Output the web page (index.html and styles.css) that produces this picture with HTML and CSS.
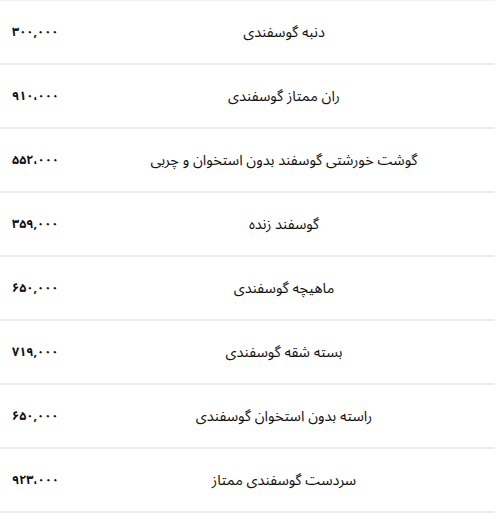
FILE: index.html
```html
<!DOCTYPE html>
<html lang="fa">
<head>
<meta charset="utf-8">
<link rel="stylesheet" href="styles.css">
</head>
<body>
<div class="table" dir="rtl">
  <div class="row"><div class="name">دنبه گوسفندی</div><div class="price">۳۰۰,۰۰۰</div></div>
  <div class="row"><div class="name">ران ممتاز گوسفندی</div><div class="price">۹۱۰،۰۰۰</div></div>
  <div class="row"><div class="name">گوشت خورشتی گوسفند بدون استخوان و چربی</div><div class="price">۵۵۲،۰۰۰</div></div>
  <div class="row"><div class="name">گوسفند زنده</div><div class="price">۳۵۹,۰۰۰</div></div>
  <div class="row"><div class="name">ماهیچه گوسفندی</div><div class="price">۶۵۰,۰۰۰</div></div>
  <div class="row"><div class="name">بسته شقه گوسفندی</div><div class="price">۷۱۹,۰۰۰</div></div>
  <div class="row"><div class="name">راسته بدون استخوان گوسفندی</div><div class="price">۶۵۰,۰۰۰</div></div>
  <div class="row"><div class="name">سردست گوسفندی ممتاز</div><div class="price">۹۲۳،۰۰۰</div></div>
</div>
</body>
</html>
```
FILE: styles.css
```css
html, body {
  margin: 0;
  padding: 0;
  background: #fff;
}
body {
  font-family: "Noto Sans Arabic", "DejaVu Sans", sans-serif;
  color: #111;
}
.table {
  width: 495px;
  border-top: 1px solid #f3f3f3;
}
.row {
  display: grid;
  grid-template-columns: 422px 73px;
  height: 62px;
  border-bottom: 2px solid #ececec;
  align-items: center;
}
.name {
  text-align: center;
  font-size: 14.5px;
}
.price {
  direction: ltr;
  text-align: left;
  padding-left: 12px;
  font-size: 12.5px;
  font-weight: bold;
}
```
